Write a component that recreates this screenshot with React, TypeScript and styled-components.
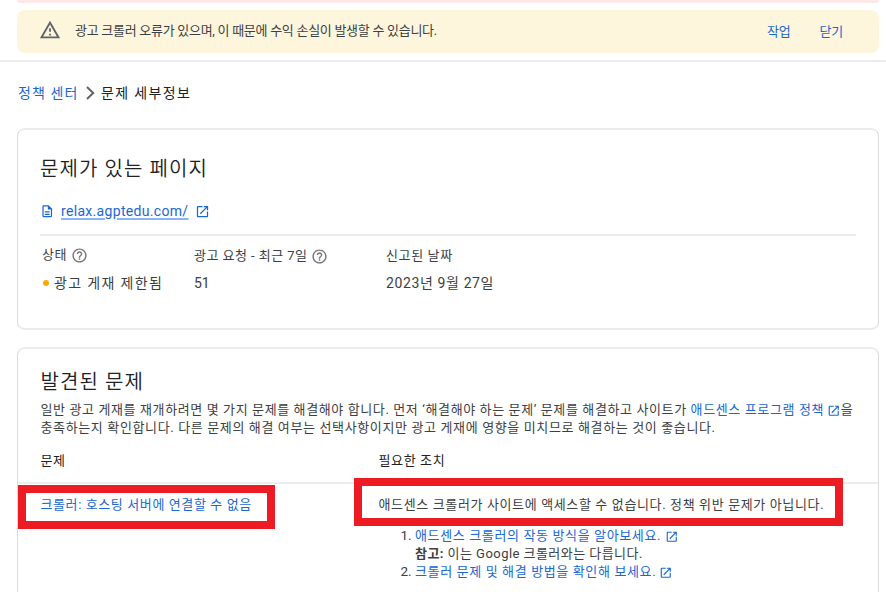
import React from "react";
import styled, { createGlobalStyle } from "styled-components";

const GlobalStyle = createGlobalStyle`
  * { box-sizing: border-box; }
  body {
    margin: 0;
    background: #fff;
    color: #3c4043;
    font-family: Roboto, "Noto Sans CJK KR", sans-serif;
    overflow: hidden;
  }
`;

const Page = styled.div`
  position: relative;
  width: 886px;
  height: 592px;
  overflow: hidden;
`;

const Notices = styled.header`
  height: 62px;
  padding: 0 7px 0 17px;
  border-bottom: 2px solid #ebebef;
`;

const ErrorNotice = styled.div`
  height: 2.5px;
  margin-bottom: 7px;
  border-radius: 0 0 8px 8px;
  background: #fce8e8;
`;

const WarningNotice = styled.div`
  display: flex;
  height: 43.5px;
  padding: 0 36px 0 22px;
  border-radius: 8px;
  background: #fdf6dd;
`;

const NoticeIcon = styled.span`
  display: flex;
  width: 36px;
  padding-top: 9.5px;
`;

const NoticeActions = styled.div`
  display: flex;
  gap: 29px;
  margin-left: auto;
  padding-top: 2.5px;
`;

interface TextProps {
  $size?: number;
  $line?: number;
  $spacing?: number;
  $color?: string;
}

const Text = styled.span<TextProps>`
  font-size: ${(p) => p.$size ?? 13}px;
  line-height: ${(p) => p.$line ?? 18}px;
  letter-spacing: ${(p) => p.$spacing ?? 0.63}px;
  color: ${(p) => p.$color ?? "#3c4043"};
  white-space: nowrap;
`;

const Link = styled(Text).attrs({ as: "a" })`
  color: #1967d2;
`;

const SiteLink = styled(Link)`
  margin-left: 6.5px;
  text-decoration: underline;
  text-decoration-color: #8ab4f8;
  text-decoration-thickness: 2px;
  text-underline-offset: 2px;
  text-decoration-skip-ink: auto;
`;

const Title = styled(Text).attrs({ as: "h2" })`
  margin: 0;
  font-weight: 350;
  color: #202124;
`;

const Breadcrumb = styled.nav`
  display: flex;
  height: 66px;
  padding: 20px 0 0 18px;
`;

const Chevron = styled.svg`
  width: 9px;
  height: 14px;
  margin: 3.5px 6.5px 0 7px;
`;

const Card = styled.section<{ $height: number }>`
  width: 862px;
  height: ${(p) => p.$height}px;
  border: 1px solid #dcdcdf;
  border-top: 2px solid #ebebee;
  border-bottom: 2px solid #ebebee;
  border-radius: 8px;
  margin: 0 0 17px 17px;
`;

const PageCard = styled(Card)`
  padding: 24px 22px 0;
`;

const IssueCard = styled(Card)`
  padding-top: 18px;
`;

const SiteRow = styled.div`
  display: flex;
  align-items: center;
  height: 24px;
  margin-top: 15px;
`;

const Stats = styled.div`
  display: grid;
  grid-template-columns: 152px 192px 1fr;
  margin-top: 11px;
  padding: 8px 0 0 2px;
  border-top: 2px solid #ededf0;
`;

const Stat = styled.div`
  display: flex;
  flex-direction: column;
  gap: 6px;
`;

const StatLine = styled.div<{ $gap: number; $drop?: number }>`
  display: flex;
  align-items: center;
  gap: ${(p) => p.$gap}px;
  height: 22px;
  padding-top: ${(p) => p.$drop ?? 0}px;
`;

const Dot = styled.span`
  width: 6px;
  height: 6px;
  margin-left: 1px;
  border-radius: 50%;
  background: #f9ab00;
`;

const Description = styled.div`
  display: flex;
  flex-direction: column;
  margin-top: 4px;
  padding-left: 22.5px;
`;

const Line = styled.div`
  display: flex;
  height: 18px;
`;

const TableRow = styled.div`
  display: grid;
  grid-template-columns: 338px 1fr;
  padding-left: 22.5px;
`;

const TableHead = styled(TableRow)`
  height: 47px;
  padding-top: 15px;
  border-bottom: 2px solid #ededee;
`;

const TableBody = styled(TableRow)`
  padding-top: 12px;
`;

const Steps = styled.ol`
  margin: 12px 0 0;
  padding-left: 36.5px;
  font-size: 13.5px;
  line-height: 18px;
  color: #3c4043;
`;

const Step = styled.li`
  height: 36px;
`;

const Highlight = styled.div<{ $x: number; $y: number; $w: number; $h: number }>`
  position: absolute;
  left: ${(p) => p.$x}px;
  top: ${(p) => p.$y}px;
  width: ${(p) => p.$w}px;
  height: ${(p) => p.$h}px;
  border: 8px solid #ed1c24;
  pointer-events: none;
`;

const Glyph = styled.svg<{ $size: number; $ml?: number; $mt?: number }>`
  flex: none;
  width: ${(p) => p.$size}px;
  height: ${(p) => p.$size}px;
  margin-left: ${(p) => p.$ml ?? 0}px;
  margin-top: ${(p) => p.$mt ?? 0}px;
`;

interface IconProps {
  size: number;
  ml?: number;
  mt?: number;
}

const icon = (d: string, fill: string) =>
  function Icon({ size, ml, mt }: IconProps) {
    return (
      <Glyph viewBox="0 0 24 24" $size={size} $ml={ml} $mt={mt} aria-hidden>
        <path d={d} fill={fill} />
      </Glyph>
    );
  };

const WarningIcon = icon(
  "M12 5.99L19.53 19H4.47L12 5.99M12 2L1 21h22L12 2zm1 14h-2v2h2v-2zm0-6h-2v4h2v-4z",
  "#5f6368"
);
const HelpIcon = icon(
  "M11 18h2v-2h-2v2zm1-16C6.48 2 2 6.48 2 12s4.48 10 10 10 10-4.48 10-10S17.52 2 12 2zm0 18c-4.41 0-8-3.59-8-8s3.59-8 8-8 8 3.59 8 8-3.59 8-8 8zm0-14c-2.21 0-4 1.79-4 4h2c0-1.1.9-2 2-2s2 .9 2 2c0 2-3 1.75-3 5h2c0-2.25 3-2.5 3-5 0-2.21-1.79-4-4-4z",
  "#70757a"
);
const DocumentIcon = icon(
  "M14 2H6c-1.1 0-1.99.9-1.99 2L4 20c0 1.1.89 2 1.99 2H18c1.1 0 2-.9 2-2V8l-6-6zM6 4h7v5h5v11H6V4zm2 8v2h8v-2H8zm0 4v2h8v-2H8z",
  "#1967d2"
);
const OpenIcon = icon(
  "M19 19H5V5h7V3H5c-1.11 0-2 .9-2 2v14c0 1.1.89 2 2 2h14c1.1 0 2-.9 2-2v-7h-2v7zM14 3v2h3.59l-9.83 9.83 1.41 1.41L19 6.41V10h2V3h-7z",
  "#1967d2"
);

export default function App() {
  return (
    <Page>
      <GlobalStyle />
      <Notices>
        <ErrorNotice />
        <WarningNotice>
          <NoticeIcon>
            <WarningIcon size={22} />
          </NoticeIcon>
          <Text $line={42} $spacing={-0.28}>광고 크롤러 오류가 있으며, 이 때문에 수익 손실이 발생할 수 있습니다.</Text>
          <NoticeActions>
            <Link $line={40} $spacing={-0.2}>작업</Link>
            <Link $line={40} $spacing={-0.2}>닫기</Link>
          </NoticeActions>
        </WarningNotice>
      </Notices>

      <Breadcrumb>
        <Link $size={14} $line={22} $spacing={1.1}>정책 센터</Link>
        <Chevron viewBox="0 0 9 14" aria-hidden>
          <path d="M1 1l6.2 6L1 13" fill="none" stroke="#5f6368" strokeWidth="2" />
        </Chevron>
        <Text $size={14} $line={22} $spacing={1.35} $color="#202124">문제 세부정보</Text>
      </Breadcrumb>

      <PageCard $height={202}>
        <Title $size={20} $line={30} $spacing={1.1}>문제가 있는 페이지</Title>
        <SiteRow>
          <DocumentIcon size={14.5} />
          <SiteLink $size={14} $line={20} $spacing={0.32}>relax.agptedu.com/</SiteLink>
          <OpenIcon size={15} ml={6.5} />
        </SiteRow>
        <Stats>
          <Stat>
            <StatLine $gap={4}>
              <Text>상태</Text>
              <HelpIcon size={17} />
            </StatLine>
            <StatLine $gap={5}>
              <Dot />
              <Text $size={14} $spacing={1.35}>광고 게재 제한됨</Text>
            </StatLine>
          </Stat>
          <Stat>
            <StatLine $gap={3} $drop={2}>
              <Text $spacing={0.46}>광고 요청 - 최근 7일</Text>
              <HelpIcon size={17} />
            </StatLine>
            <StatLine $gap={0}>
              <Text $size={14} $spacing={0}>51</Text>
            </StatLine>
          </Stat>
          <Stat>
            <StatLine $gap={0} $drop={2}>
              <Text>신고된 날짜</Text>
            </StatLine>
            <StatLine $gap={0}>
              <Text $size={14} $spacing={0.62}>2023년 9월 27일</Text>
            </StatLine>
          </Stat>
        </Stats>
      </PageCard>

      <IssueCard $height={300}>
        <TableRow>
          <Title $size={20} $line={30} $spacing={1.1}>발견된 문제</Title>
        </TableRow>
        <Description>
          <Line>
            <Text $spacing={0.61}>일반 광고 게재를 재개하려면 몇 가지 문제를 해결해야 합니다. 먼저 ‘해결해야 하는 문제’ 문제를 해결하고 사이트가&nbsp;</Text>
            <Link>애드센스 프로그램 정책</Link>
            <OpenIcon size={13.5} ml={3} mt={2.5} />
            <Text>을</Text>
          </Line>
          <Line>
            <Text>충족하는지 확인합니다. 다른 문제의 해결 여부는 선택사항이지만 광고 게재에 영향을 미치므로 해결하는 것이 좋습니다.</Text>
          </Line>
        </Description>
        <TableHead>
          <Text $color="#202124">문제</Text>
          <Text $color="#202124">필요한 조치</Text>
        </TableHead>
        <TableBody>
          <Link $spacing={0.6}>크롤러: 호스팅 서버에 연결할 수 없음</Link>
          <div>
            <Line>
              <Text>애드센스 크롤러가 사이트에 액세스할 수 없습니다. 정책 위반 문제가 아닙니다.</Text>
            </Line>
            <Steps>
              <Step>
                <Line>
                  <Link>애드센스 크롤러의 작동 방식을 알아보세요.</Link>
                  <OpenIcon size={13.5} ml={3.5} mt={2.5} />
                </Line>
                <Line>
                  <Text $spacing={0.45}><b>참고:</b> 이는 Google 크롤러와는 다릅니다.</Text>
                </Line>
              </Step>
              <Step>
                <Line>
                  <Link>크롤러 문제 및 해결 방법을 확인해 보세요.</Link>
                  <OpenIcon size={13.5} ml={3} mt={2.5} />
                </Line>
              </Step>
            </Steps>
          </div>
        </TableBody>
      </IssueCard>

      <Highlight $x={18} $y={485} $w={257} $h={44} />
      <Highlight $x={354} $y={478} $w={489} $h={48} />
    </Page>
  );
}
